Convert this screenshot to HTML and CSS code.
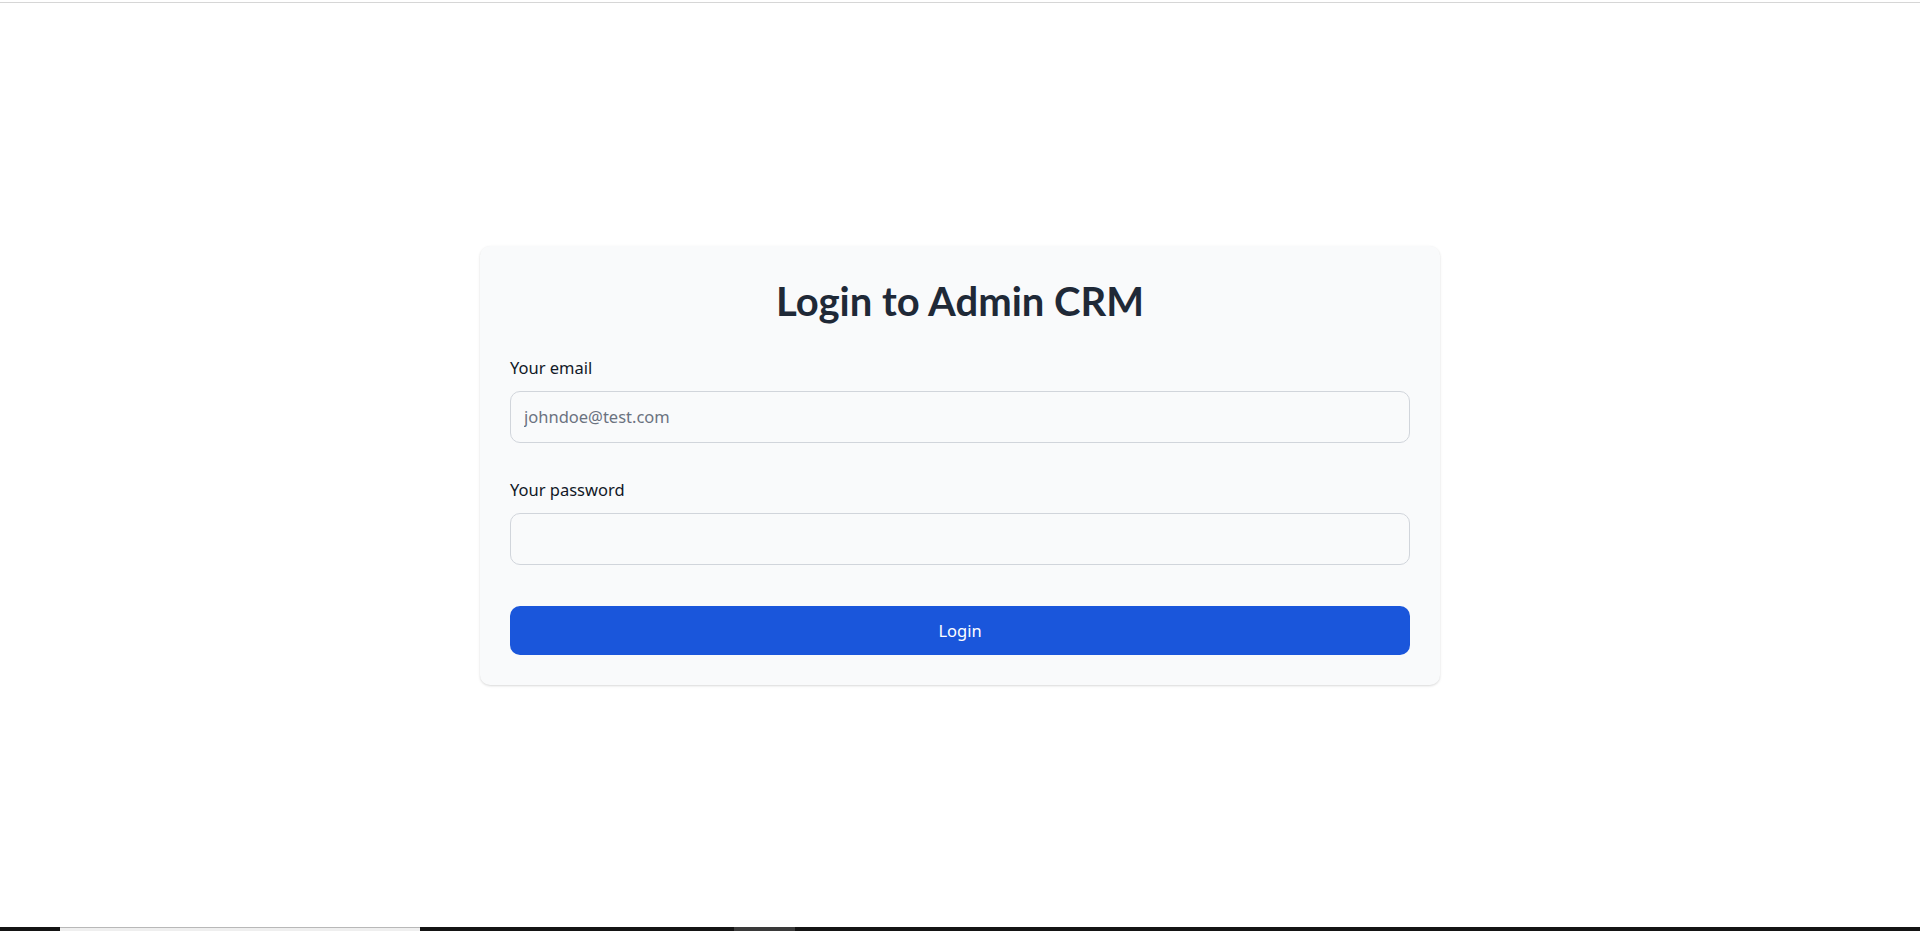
FILE: index.html
```html
<!DOCTYPE html>
<html lang="en">
<head>
<meta charset="utf-8">
<title>Login to Admin CRM</title>
<link rel="stylesheet" href="styles.css">
</head>
<body>
<div class="page">
  <div class="topline"></div>
  <main class="main">
    <section class="card">
      <h1 class="title">Login to Admin CRM</h1>
      <form class="form">
        <div class="field field-email">
          <label class="label" for="email">Your email</label>
          <input class="input" id="email" type="email" placeholder="johndoe@test.com">
        </div>
        <div class="field field-password">
          <label class="label" for="password">Your password</label>
          <input class="input" id="password" type="password">
        </div>
        <button class="button" type="button">Login</button>
      </form>
    </section>
  </main>
  <div class="taskbar">
    <span class="tb tb-black tb-a"></span>
    <span class="tb tb-light tb-b"></span>
    <span class="tb tb-black tb-c"></span>
    <span class="tb tb-grey tb-d"></span>
    <span class="tb tb-black tb-e"></span>
  </div>
</div>
</body>
</html>
```

FILE: styles.css
```css
* { box-sizing: border-box; }
html, body { margin: 0; padding: 0; background: #ffffff; }
body { font-family: "Noto Sans", "Open Sans", Arial, sans-serif; color: #111827; }

.page { height: 931px; display: flex; flex-direction: column; }

.topline { height: 3px; border-bottom: 1px solid #d6d6d6; flex: none; }

.main { flex: 1; display: flex; align-items: center; justify-content: center; }

.card {
  width: 960px;
  background: #f9fafb;
  border-radius: 10px;
  padding: 30px;
  box-shadow: 0 1px 3px rgba(0,0,0,0.10), 0 1px 2px rgba(0,0,0,0.06);
}

.title {
  margin: 0 0 30px;
  text-align: center;
  font-family: Lato, "Noto Sans", sans-serif;
  font-size: 40px;
  line-height: 50px;
  font-weight: 700;
  color: #1f2937;
}

.form { display: flex; flex-direction: column; }

.field { display: flex; flex-direction: column; }
.field-email { margin-bottom: 35px; }
.field-password { margin-bottom: 41px; }

.label {
  font-size: 16.5px;
  line-height: 23px;
  color: #111827;
  margin-bottom: 12px;
}

.input {
  height: 52px;
  border: 1px solid #d1d5db;
  border-radius: 10px;
  background: #f9fafb;
  padding: 0 13px;
  font-family: inherit;
  font-size: 16.5px;
  color: #111827;
  outline: none;
}
.input::placeholder { color: #6b7280; }

.button {
  height: 49px;
  border: none;
  border-radius: 10px;
  background: #1a56db;
  color: #ffffff;
  font-family: inherit;
  font-size: 16.5px;
  cursor: pointer;
}

.taskbar { height: 4px; display: flex; flex: none; }
.tb { display: block; height: 4px; }
.tb-black { background: #141414; }
.tb-light { background: #efefef; border-top: 1px solid #b8b8b8; }
.tb-grey { background: #3a3a3a; }
.tb-a { width: 60px; }
.tb-b { width: 360px; }
.tb-c { width: 314px; }
.tb-d { width: 61px; }
.tb-e { flex: 1; }
```
